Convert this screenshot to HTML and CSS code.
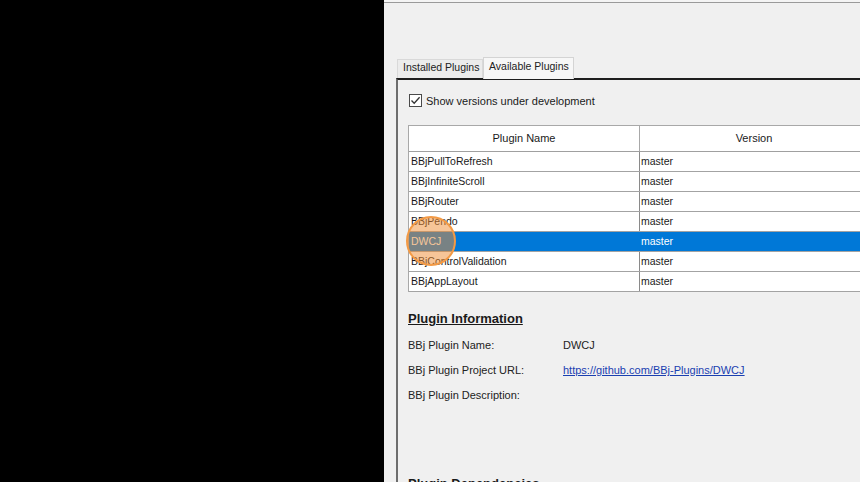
FILE: index.html
```html
<!DOCTYPE html>
<html>
<head>
<meta charset="utf-8">
<link rel="stylesheet" href="styles.css">
</head>
<body>
<div class="screen">
  <div class="blackout"></div>
  <div class="window">
    <div class="topline"></div>
    <div class="tabs">
      <div class="tab">Installed Plugins</div>
      <div class="tab active">Available Plugins</div>
    </div>
    <div class="panel">
      <label class="check">
        <span class="box"><svg width="11" height="11" viewBox="0 0 11 11"><path d="M1.5 5.5 L4.2 8.3 L9.6 2.2" fill="none" stroke="#333" stroke-width="1.3"/></svg></span>
        <span>Show versions under development</span>
      </label>
      <div class="tablewrap">
        <div class="table">
          <div class="row head"><div class="c1">Plugin Name</div><div class="c2">Version</div></div>
          <div class="row"><div class="c1">BBjPullToRefresh</div><div class="c2">master</div></div>
          <div class="row"><div class="c1">BBjInfiniteScroll</div><div class="c2">master</div></div>
          <div class="row"><div class="c1">BBjRouter</div><div class="c2">master</div></div>
          <div class="row"><div class="c1">BBjPendo</div><div class="c2">master</div></div>
          <div class="row sel"><div class="c1">DWCJ</div><div class="c2">master</div></div>
          <div class="row"><div class="c1">BBjControlValidation</div><div class="c2">master</div></div>
          <div class="row"><div class="c1">BBjAppLayout</div><div class="c2">master</div></div>
        </div>
        <div class="spot"></div>
      </div>
      <h2 class="heading">Plugin Information</h2>
      <div class="info">
        <div class="label">BBj Plugin Name:</div><div class="value">DWCJ</div>
        <div class="label">BBj Plugin Project URL:</div><div class="value"><a href="#">https://github.com/BBj-Plugins/DWCJ</a></div>
        <div class="label">BBj Plugin Description:</div><div class="value"></div>
      </div>
      <h2 class="heading deps">Plugin Dependencies</h2>
    </div>
  </div>
</div>
</body>
</html>
```
FILE: styles.css
```css
html, body { margin: 0; padding: 0; }
body {
  background: #000;
  font-family: "Liberation Sans", Arial, sans-serif;
  font-size: 11px;
  color: #1a1a1a;
  overflow: hidden;
}
.screen { display: flex; width: 860px; height: 482px; overflow: hidden; }
.blackout { width: 384px; flex: none; background: #000; }
.window {
  flex: 1;
  background: #f0f0f0;
  overflow: hidden;
  display: flex;
  flex-direction: column;
  padding-left: 12px;
}
.topline {
  height: 2px;
  border-bottom: 1px solid #9a9a9a;
  margin-left: -12px;
  background: #f4f4f4;
  flex: none;
}
.tabs {
  display: flex;
  align-items: flex-end;
  margin-top: 52px;
  padding-left: 1px;
  height: 23px;
  flex: none;
}
.tab {
  height: 19px;
  line-height: 15px;
  padding: 0 0 0 5px;
  border: 1px solid #d9d9d9;
  border-bottom: none;
  background: #ececec;
  color: #222;
  box-sizing: border-box;
  width: 86px;
  white-space: nowrap;
  font-size: 10.5px;
}
.tab.active {
  height: 22px;
  line-height: 16px;
  background: #f7f7f7;
  width: 91px;
  border-color: #d4d4d4;
  padding-left: 5px;
  position: relative;
  z-index: 1;
  margin-bottom: -1px;
}
.panel {
  border-top: 2px solid #1e1e1e;
  border-left: 2px solid #6d6d6d;
  width: 600px;
  flex: 1;
  padding-left: 10px;
  display: flex;
  flex-direction: column;
}
.check {
  display: flex;
  align-items: center;
  gap: 4px;
  margin-top: 13px;
  margin-left: 1px;
  height: 15px;
}
.box {
  width: 11px; height: 11px;
  border: 1px solid #4a4a4a;
  background: #fff;
  display: flex;
}
.tablewrap {
  position: relative;
  margin-top: 17px;
  width: 470px;
}
.table {
  border-top: 1px solid #a8a8a8;
  border-left: 1px solid #a8a8a8;
  background: #fff;
}
.row {
  display: grid;
  grid-template-columns: 231px 228px;
  height: 20px;
  border-bottom: 1px solid #a3a3a3;
  box-sizing: border-box;
  font-size: 10.5px;
  line-height: 19px;
}
.row .c1 { padding-left: 2px; border-right: 1px solid #8a8a8a; }
.row .c2 { padding-left: 1px; }
.row.head {
  height: 26px;
  line-height: 25px;
  font-size: 11px;
  border-bottom: 1px solid #a0a0a0;
}
.row.head .c1, .row.head .c2 { text-align: center; padding: 0; }
.row.head .c1 { border-right: 1px solid #a8a8a8; }
.row.sel { background: #0078d7; color: #fff; }
.row.sel .c1 { border-right-color: #0078d7; }
.spot {
  position: absolute;
  left: -2px;
  top: 91px;
  width: 46px;
  height: 46px;
  border-radius: 50%;
  border: 2.5px solid #f39a45;
  background: rgba(240, 140, 50, 0.5);
}
.heading {
  font-size: 13px;
  font-weight: bold;
  text-decoration: underline;
  margin: 19px 0 0 0;
  color: #1a1a1a;
  line-height: 16px;
}
.info {
  display: grid;
  grid-template-columns: 155px 1fr;
  grid-auto-rows: 25px;
  margin-top: 12px;
  line-height: 13px;
}
.info .label, .info .value { color: #222; }
.info a { color: #1a3fb0; text-decoration: underline; }
.deps { margin-top: 62px; text-decoration: none; }
```
